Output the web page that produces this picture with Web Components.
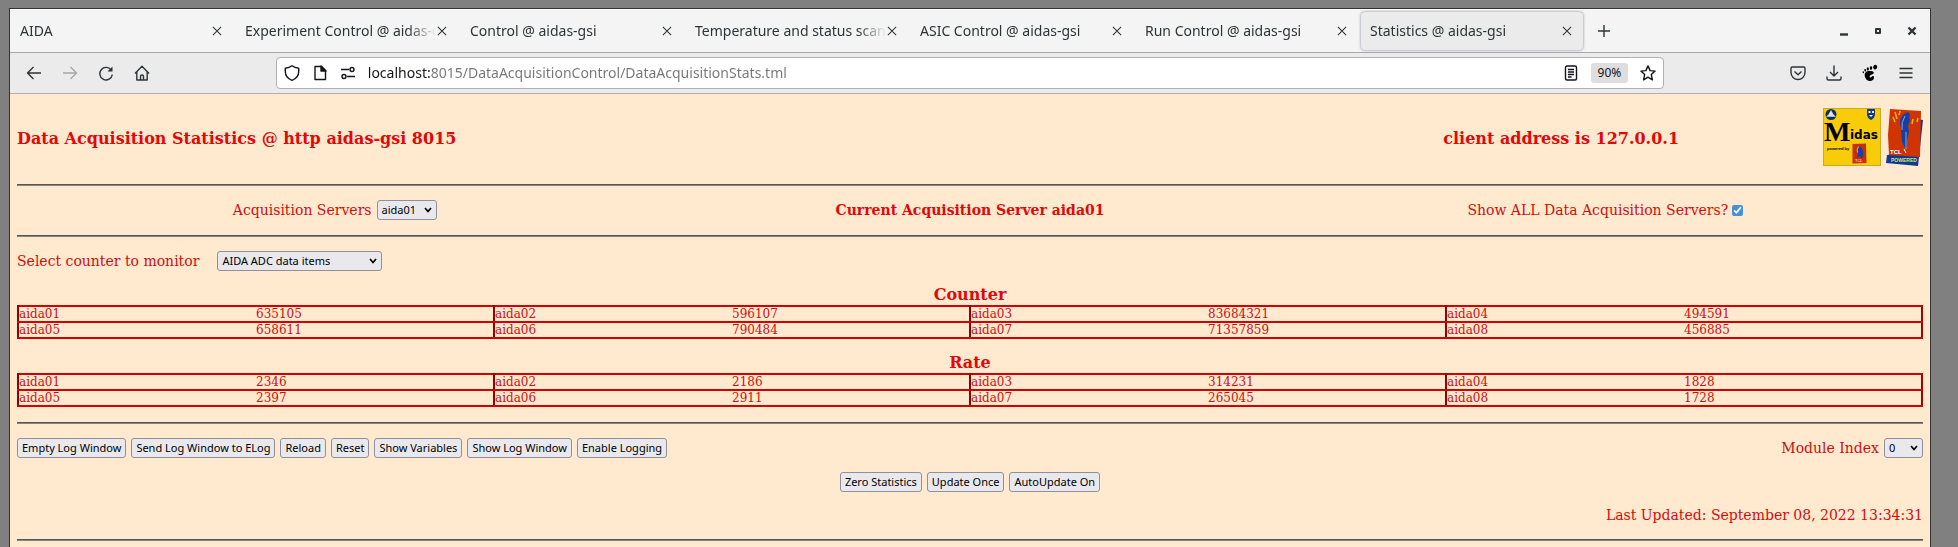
<!DOCTYPE html>
<html lang="en">
  <head>
    <meta charset="utf-8">
    <title>Statistics @ aidas-gsi</title>
    <style type="text/css">
      html {
        --ui-font: "Noto Sans", "Open Sans", sans-serif;
        --page-font: "DejaVu Serif", serif;
        --paper: #ffe9cf;
        --ink: #cc1010;
        --strong-ink: #e00808;

        background: #808080;
      }

      body {
        box-sizing: border-box;
        display: flex;
        min-height: 100vh;
        margin: 0;
        padding: 8px 27px 0 9px;
      }

      browser-window {
        flex: 1 1 auto;
      }
    </style>
  </head>
  <body>
    <browser-window>
      <browser-tab slot="tabs">AIDA</browser-tab>
      <browser-tab slot="tabs">Experiment Control @ aidas-gsi</browser-tab>
      <browser-tab slot="tabs">Control @ aidas-gsi</browser-tab>
      <browser-tab slot="tabs">Temperature and status scan @</browser-tab>
      <browser-tab slot="tabs">ASIC Control @ aidas-gsi</browser-tab>
      <browser-tab slot="tabs">Run Control @ aidas-gsi</browser-tab>
      <browser-tab slot="tabs" active>Statistics @ aidas-gsi</browser-tab>
      <browser-toolbar slot="toolbar" url="localhost:8015/DataAcquisitionControl/DataAcquisitionStats.tml"></browser-toolbar>
      <stats-page></stats-page>
    </browser-window>

    <script>
      const ICONS = {
        close: '<path d="M2.500 2.500l11 11M13.500 2.500l-11 11"/>',
        plus: '<path d="M8 2v12M2 8h12"/>',
        minimise: '<path d="M4 11.500h8" stroke-width="2.4"/>',
        maximise: '<rect x="6" y="6" width="4" height="4" stroke-width="2"/>',
        quit: '<path d="M4.500 4.500l7 7M11.500 4.500l-7 7" stroke-width="2.4"/>',
        back: '<path d="M15 8H1.500M7.500 2L1.500 8l6 6"/>',
        forward: '<path d="M1 8h13.500M8.500 2l6 6-6 6"/>',
        reload: '<path d="M13.500 5.500A6.300 6.300 0 1 0 14.300 9.500"/><path d="M14.500 1.500v5h-5z" fill="currentColor" stroke="none"/>',
        home: '<path d="M1 8.500L8 1.200l7 7.300M2.800 7v8h10.400V7M6.500 15v-3.500a1.500 1.500 0 0 1 3 0V15"/>',
        shield: '<path d="M8 .8C6 2.300 3.700 3 1.300 3.200v3.300C1.300 10.500 4 13.800 8 15.300c4-1.500 6.700-4.800 6.700-8.800V3.200C12.300 3 10 2.300 8 .8z"/>',
        page: '<path d="M3 1.500h6.500l4 4v9H3z"/><path d="M9 1l5 5H9z" fill="currentColor"/>',
        permissions: '<path d="M1 4.500h8M7 11.500h8"/><circle cx="12" cy="4.500" r="2"/><circle cx="4" cy="11.500" r="2"/>',
        reader: '<rect x="2.500" y="1" width="11" height="14" rx="1.500"/><path d="M5 4.500h6M5 7h6M5 9.500h6M5 12h3.500"/>',
        star: '<path d="M8 .9l2.100 4.700 5 .5-3.800 3.500 1.100 5.200L8 12.200l-4.400 2.600 1.100-5.200L.9 6.100l5-.5z"/>',
        pocket: '<path d="M2.300 2h11.400c.8 0 1.300.5 1.300 1.300V7.500a7 7 0 0 1-14 0V3.300C1 2.500 1.500 2 2.300 2z"/><path d="M4.500 6.500L8 9.800l3.500-3.300"/>',
        download: '<path d="M8 .5v10.500M4 7l4 4 4-4M1 11.500v2c0 1 .5 1.500 1.500 1.500h11c1 0 1.500-.5 1.500-1.500v-2"/>',
        menu: '<path d="M1.500 3.500h13M1.500 8h13M1.500 12.500h13"/>',
        foot: `<g fill="currentColor" stroke="none">
          <path d="M7.500 6C4 6 2.500 8 2.700 10.200 3 13.500 5 16 8 16c2.300 0 4-1.300 4-3.500 0-1.200-.9-1.700-1.700-1.200-.8.500-1 1.500-2 1.200-1.300-.4-.6-2 .6-2.600C10.300 9.200 12 8.800 11.800 7.400 11.500 6.300 9.500 6 7.500 6z"/>
          <ellipse cx="13.200" cy="2.200" rx="2" ry="2.300" transform="rotate(25 13.200 2.200)"/>
          <ellipse cx="9" cy="3" rx="1.200" ry="1.900" transform="rotate(10 9 3)"/>
          <ellipse cx="5.800" cy="3.900" rx="1.100" ry="1.600"/>
          <ellipse cx="3.200" cy="5.300" rx=".9" ry="1.300" transform="rotate(-15 3.200 5.300)"/>
          <ellipse cx="1.300" cy="7.200" rx=".7" ry="1" transform="rotate(-20 1.300 7.200)"/>
        </g>`
      }

      const CONTROL_STYLE = `
        button, select {
          box-sizing: border-box;
          height: 20px;
          margin: 0;
          border: 1px solid #8f8f9d;
          border-radius: 3px;
          background-color: #e9e9ed;
          color: #000;
          font: 11px/16px var(--ui-font);
          white-space: nowrap;
        }
      `

      // Shared base: puts the markup of the subclass into an open shadow root
      class BaseElement extends HTMLElement {
        constructor() {
          super()
          this._shadowRoot = this.attachShadow({ mode: 'open' })
        }

        connectedCallback() {
          this._shadowRoot.innerHTML = this.render()
        }
      }

      class UiIcon extends BaseElement {
        render() {
          return `
            <style>
              :host {
                display: inline-block;
                flex: none;
                width: 16px;
                height: 16px;
              }
              svg {
                display: block;
                width: 100%;
                height: 100%;
                overflow: visible;
                fill: none;
                stroke: currentColor;
                stroke-width: 1.4;
                stroke-linejoin: round;
              }
            </style>
            <svg viewBox="0 0 16 16" aria-hidden="true">${ICONS[this.getAttribute('name')]}</svg>
          `
        }
      }

      class BrowserTab extends BaseElement {
        render() {
          return `
            <style>
              :host {
                display: flex;
                flex: 0 1 222px;
                box-sizing: border-box;
                min-width: 0;
                height: 38px;
                padding: 0 10px 0 9px;
                align-items: center;
                border-radius: 4px;
              }
              :host([active]) {
                background: #ebebeb;
                box-shadow: 0 0 3px #8080a0;
              }
              button {
                padding: 0;
                border: 0;
                background: none;
                color: #2e3436;
                font: 14px/20px var(--ui-font);
              }
              .label {
                flex: 1 1 0;
                min-width: 0;
                overflow: hidden;
                text-align: left;
                white-space: nowrap;
                -webkit-mask-image: linear-gradient(to left, transparent, #000 28px);
                mask-image: linear-gradient(to left, transparent, #000 28px);
              }
              .close {
                display: flex;
              }
              ui-icon {
                width: 12px;
                height: 12px;
              }
            </style>
            <button class="label" role="tab" aria-selected="${this.hasAttribute('active')}"><slot></slot></button>
            <button class="close" aria-label="Close tab"><ui-icon name="close"></ui-icon></button>
          `
        }
      }

      class BrowserToolbar extends BaseElement {
        render() {
          return `
            <style>
              :host {
                display: flex;
                box-sizing: border-box;
                height: 41px;
                padding: 0 16px;
                align-items: center;
                gap: 20px;
                border-bottom: 1px solid #b0b0b0;
                background: #ebebeb;
                color: #2e3436;
              }
              button {
                display: flex;
                flex: none;
                padding: 0;
                border: 0;
                background: none;
                color: inherit;
              }
              button:disabled {
                color: #a8a8a8;
              }
              .spring {
                flex: 1 1 0;
              }
              .address {
                display: flex;
                flex: 16 1 0;
                box-sizing: border-box;
                min-width: 0;
                height: 32px;
                padding: 0 7px;
                align-items: center;
                gap: 12px;
                border: 1px solid #b0b0b0;
                border-radius: 4px;
                background: #fff;
                color: #15141a;
              }
              input {
                flex: 1 1 0;
                min-width: 0;
                padding: 0;
                border: 0;
                outline: 0;
                /* host name dark, the rest of the address grey */
                background: linear-gradient(to right, #15141a 62px, #767676 62px);
                -webkit-background-clip: text;
                background-clip: text;
                color: transparent;
                font: 14px/24px var(--ui-font);
              }
              .address .zoom {
                padding: 0 7px;
                border-radius: 3px;
                background: #dedede;
                font: 12px/20px var(--ui-font);
              }
            </style>
            <button aria-label="Back"><ui-icon name="back"></ui-icon></button>
            <button aria-label="Forward" disabled><ui-icon name="forward"></ui-icon></button>
            <button aria-label="Reload"><ui-icon name="reload"></ui-icon></button>
            <button aria-label="Home"><ui-icon name="home"></ui-icon></button>
            <div class="spring"></div>
            <div class="address">
              <button aria-label="Tracking protection"><ui-icon name="shield"></ui-icon></button>
              <button aria-label="Site information"><ui-icon name="page"></ui-icon></button>
              <button aria-label="Permissions"><ui-icon name="permissions"></ui-icon></button>
              <input type="text" aria-label="Address" value="${this.getAttribute('url')}">
              <button aria-label="Reader view"><ui-icon name="reader"></ui-icon></button>
              <button class="zoom">90%</button>
              <button aria-label="Bookmark"><ui-icon name="star"></ui-icon></button>
            </div>
            <div class="spring"></div>
            <button aria-label="Save to Pocket"><ui-icon name="pocket"></ui-icon></button>
            <button aria-label="Downloads"><ui-icon name="download"></ui-icon></button>
            <button aria-label="GNOME"><ui-icon name="foot" style="color: #000"></ui-icon></button>
            <button aria-label="Menu"><ui-icon name="menu"></ui-icon></button>
          `
        }
      }

      class BrowserWindow extends BaseElement {
        render() {
          return `
            <style>
              :host {
                display: flex;
                flex-direction: column;
                box-sizing: border-box;
                min-width: 0;
                border: solid #333;
                border-width: 1px 1px 0;
                background: var(--paper);
              }
              .strip {
                display: flex;
                box-sizing: border-box;
                height: 44px;
                padding: 0 10px 0 1px;
                align-items: center;
                gap: 3px;
                border-top: 1px solid #fff;
                border-bottom: 1px solid #a8a8a8;
                background: #f4f4f4;
                color: #2e3436;
              }
              .controls {
                display: flex;
                margin-left: auto;
                gap: 18px;
              }
              button {
                display: flex;
                padding: 0;
                border: 0;
                background: none;
                color: inherit;
              }
              .new {
                margin-left: 10px;
              }
            </style>
            <div class="strip">
              <slot name="tabs"></slot>
              <button class="new" aria-label="New tab"><ui-icon name="plus"></ui-icon></button>
              <div class="controls">
                <button aria-label="Minimise"><ui-icon name="minimise"></ui-icon></button>
                <button aria-label="Maximise"><ui-icon name="maximise"></ui-icon></button>
                <button aria-label="Close window"><ui-icon name="quit"></ui-icon></button>
              </div>
            </div>
            <slot name="toolbar"></slot>
            <slot></slot>
          `
        }
      }

      class LabelledSelect extends BaseElement {
        render() {
          return `
            <style>
              ${CONTROL_STYLE}
              :host {
                display: inline-flex;
                align-items: center;
                gap: var(--gap, 5px);
              }
              select {
                appearance: none;
                width: var(--width, 60px);
                padding: 0 4px;
                background-image: url('data:image/svg+xml,<svg xmlns="http://www.w3.org/2000/svg" width="8" height="6"><path d="M1 1l3 3.500L7 1" fill="none" stroke="black" stroke-width="1.700"/></svg>');
                background-position: right 4px center;
                background-repeat: no-repeat;
              }
            </style>
            <label for="field"><slot></slot></label>
            <select id="field"><option>${this.getAttribute('value')}</option></select>
          `
        }
      }

      class ButtonRow extends BaseElement {
        render() {
          const labels = this.getAttribute('labels').split(', ')
          return `
            <style>
              ${CONTROL_STYLE}
              :host {
                display: flex;
                gap: 5px;
              }
              button {
                padding: 0 4px;
              }
            </style>
            ${labels.map(label => `<button>${label}</button>`).join('')}
          `
        }
      }

      // Values come as one comma separated list, four servers to a row
      class CounterTable extends BaseElement {
        render() {
          const cells = this.getAttribute('values').split(',').map((value, i) =>
            `<td>aida0${i + 1}</td><td>${value}</td>`)
          return `
            <style>
              :host {
                display: block;
              }
              table {
                width: 100%;
                border: 2px solid #d40000;
                border-right-color: #a80000;
                border-collapse: collapse;
                table-layout: fixed;
                font-size: 12px;
                line-height: 14px;
              }
              caption {
                color: var(--strong-ink);
                font-weight: bold;
                font-size: 16px;
                line-height: 20px;
              }
              td {
                height: 14px;
                padding: 0;
                border-bottom: 2px solid #d40000;
              }
              td:nth-child(odd) {
                border-left: 2px solid #980000;
              }
            </style>
            <table>
              <caption><slot></slot></caption>
              <tr>${cells.slice(0, 4).join('')}</tr>
              <tr>${cells.slice(4).join('')}</tr>
            </table>
          `
        }
      }

      class MidasLogo extends BaseElement {
        render() {
          return `
            <style>
              :host, svg {
                display: block;
                width: 58px;
                height: 58px;
              }
            </style>
            <svg viewBox="0 0 58 58" role="img" aria-label="Midas powered by Tcl">
              <rect x=".5" y=".5" width="57" height="57" fill="#f8cc08" stroke="#c8aa28"/>
              <circle cx="8" cy="6.500" r="5.500" fill="#12305c"/>
              <path d="M8 2l2.500 4.500 2.500 2.200H3l2.500-2.200z" fill="#d8e4ee"/>
              <path d="M44 1h8v5q0 4-4 6-4-2-4-6z" fill="#153a80"/>
              <path d="M45.500 3h2v2h-2zM49 3h2v2h-2zM46 7h4l-2 2z" fill="#eef"/>
              <text x="1" y="33" font-family="Liberation Serif" font-weight="bold" font-size="28">M</text>
              <text x="27" y="31" font-family="DejaVu Sans" font-weight="bold" font-size="12">idas</text>
              <text x="4" y="42" font-family="Liberation Sans" font-weight="bold" font-size="4">powered by</text>
              <path d="M29.500 36l13.500-.5.500 19.500-14 .5z" fill="#cc2c08"/>
              <path d="M37 38q-4 3-2 7l-1 5 3-2 2 3q2-4 1-8t-3-5z" fill="#1840a0"/>
              <path d="M35.500 38.500q-2 3-1 6" fill="none" stroke="#e8d0d0" stroke-width=".8"/>
              <text x="32" y="54" font-family="Liberation Sans" font-size="4" fill="#fff">TCL</text>
            </svg>
          `
        }
      }

      class TclLogo extends BaseElement {
        render() {
          return `
            <style>
              :host, svg {
                display: block;
                width: 37px;
                height: 58px;
              }
            </style>
            <svg viewBox="0 0 37 58" role="img" aria-label="Tcl powered">
              <path d="M31 11l6 1-4 37-1 9-32-3 1-8 28-3z" fill="#103898"/>
              <path d="M4 1l31 2-1 46-31-2-1-20z" fill="#d03400"/>
              <path d="M18 6q5-4 6 1l-1 2 1 3-2 6 1 6-2 8 0 7-2 1-3-6-1-12-1-8q0-5 4-8z" fill="#1440a4"/>
              <path d="M19 8q-4 6-3 14M20 24v17" fill="none" stroke="#88a8d8" stroke-width="1"/>
              <path d="M9 4l2 7M14 3l-1 4M27 11l-1 5M32 10l-1 4M7 9l2 5" fill="none" stroke="#f0a830" stroke-width="1.600"/>
              <text x="4" y="46" font-family="Liberation Sans" font-size="6" font-weight="bold" fill="#fff">TCL</text>
              <path d="M18 41l2 4" stroke="#fff"/>
              <text x="5" y="54" font-family="Liberation Sans" font-weight="bold" font-size="5" fill="#d8e860">POWERED</text>
            </svg>
          `
        }
      }

      class StatsPage extends BaseElement {
        render() {
          return `
            <style>
              :host {
                display: flex;
                flex-direction: column;
                padding: 14px 7px 0;
                gap: 14px;
                color: var(--ink);
                font: 14px/20px var(--page-font);
              }
              hr {
                box-sizing: border-box;
                flex: none;
                width: 100%;
                height: 2px;
                margin: 1px 0 0;
                border: solid;
                border-width: 1px 0;
                border-color: #585850 transparent #848480;
              }
              header {
                display: grid;
                grid-template-columns: 71fr 29fr auto;
                min-height: 61px;
                align-items: center;
              }
              h1 {
                margin: 0;
                color: var(--strong-ink);
                font-size: 16px;
                line-height: 20px;
              }
              h1:nth-child(2) {
                text-align: center;
              }
              .logos {
                display: flex;
                align-self: start;
                gap: 5px;
              }
              .servers {
                display: grid;
                grid-template-columns: repeat(3, 1fr);
                align-items: center;
                justify-items: center;
              }
              b {
                color: var(--strong-ink);
              }
              .check {
                display: flex;
                align-items: center;
                gap: 4px;
              }
              input {
                width: 11px;
                height: 11px;
                margin: 0;
                accent-color: #4a90d9;
              }
              .actions {
                display: flex;
                justify-content: space-between;
              }
              .updates {
                justify-content: center;
              }
              .stamp {
                margin: 0;
                text-align: right;
                line-height: 18px;
              }
            </style>
            <header>
              <h1>Data Acquisition Statistics @ http aidas-gsi 8015</h1>
              <h1>client address is 127.0.0.1</h1>
              <div class="logos">
                <midas-logo></midas-logo>
                <tcl-logo></tcl-logo>
              </div>
            </header>
            <hr>
            <div class="servers">
              <labelled-select value="aida01">Acquisition Servers</labelled-select>
              <b>Current Acquisition Server aida01</b>
              <label class="check">Show ALL Data Acquisition Servers? <input type="checkbox" checked></label>
            </div>
            <hr>
            <labelled-select value="AIDA ADC data items" style="--gap: 18px; --width: 165px">Select counter to monitor</labelled-select>
            <counter-table values="635105,596107,83684321,494591,658611,790484,71357859,456885">Counter</counter-table>
            <counter-table values="2346,2186,314231,1828,2397,2911,265045,1728">Rate</counter-table>
            <hr>
            <div class="actions">
              <button-row labels="Empty Log Window, Send Log Window to ELog, Reload, Reset, Show Variables, Show Log Window, Enable Logging"></button-row>
              <labelled-select value="0" style="--width: 39px">Module Index</labelled-select>
            </div>
            <button-row class="updates" labels="Zero Statistics, Update Once, AutoUpdate On"></button-row>
            <p class="stamp">Last Updated: September 08, 2022 13:34:31</p>
            <hr>
          `
        }
      }

      customElements.define('ui-icon', UiIcon)
      customElements.define('labelled-select', LabelledSelect)
      customElements.define('button-row', ButtonRow)
      customElements.define('counter-table', CounterTable)
      customElements.define('midas-logo', MidasLogo)
      customElements.define('tcl-logo', TclLogo)
      customElements.define('stats-page', StatsPage)
      customElements.define('browser-tab', BrowserTab)
      customElements.define('browser-toolbar', BrowserToolbar)
      customElements.define('browser-window', BrowserWindow)
    </script>
  </body>
</html>
